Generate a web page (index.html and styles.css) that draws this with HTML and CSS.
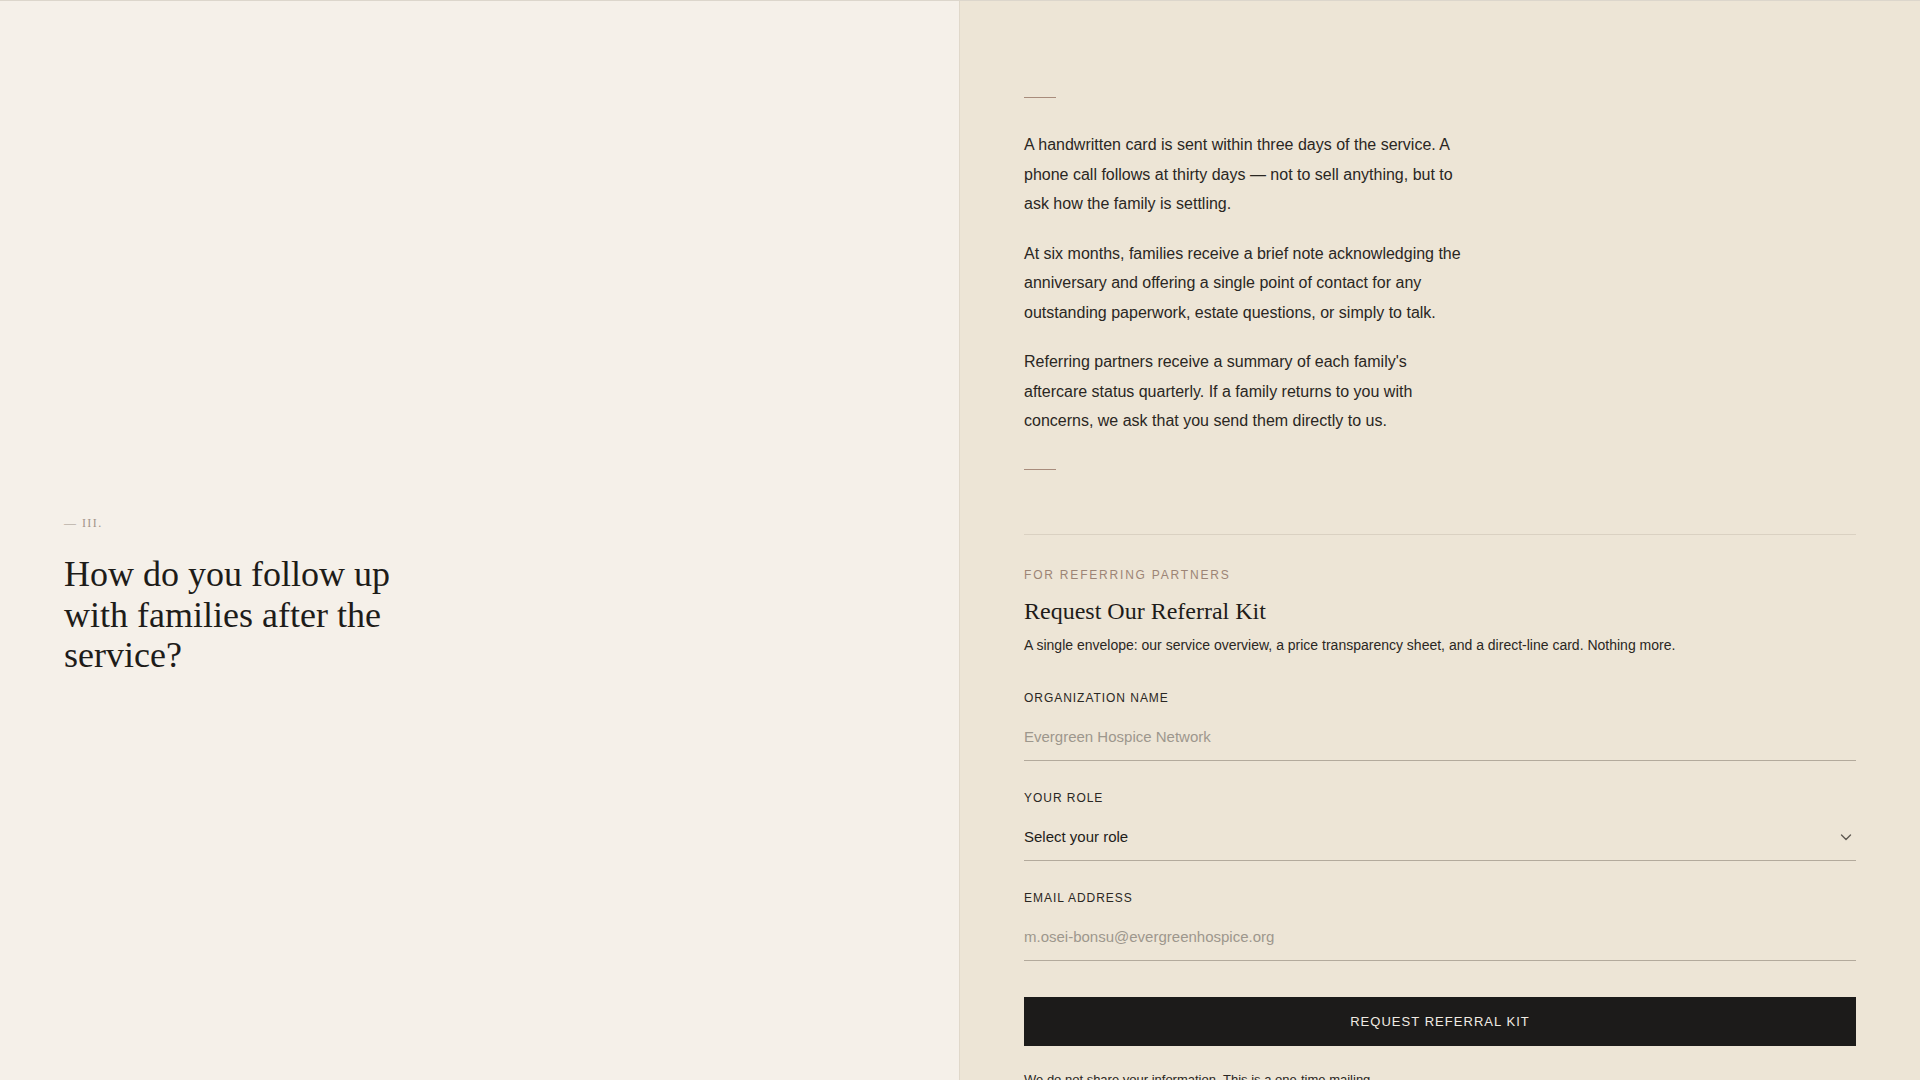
FILE: index.html
```html
<!DOCTYPE html>
<html lang="en">
<head>
<meta charset="utf-8">
<title>Aftercare — Referral Kit</title>
<link rel="stylesheet" href="styles.css">
</head>
<body>
<main class="split">
  <section class="question">
    <div class="question-inner">
      <p class="numeral">— III.</p>
      <h2 class="question-title">How do you follow up with families after the service?</h2>
    </div>
  </section>
  <section class="answer">
    <hr class="short-rule">
    <div class="answer-text">
      <p>A handwritten card is sent within three days of the service. A phone call follows at thirty days — not to sell anything, but to ask how the family is settling.</p>
      <p>At six months, families receive a brief note acknowledging the anniversary and offering a single point of contact for any outstanding paperwork, estate questions, or simply to talk.</p>
      <p>Referring partners receive a summary of each family's aftercare status quarterly. If a family returns to you with concerns, we ask that you send them directly to us.</p>
    </div>
    <hr class="short-rule">
    <div class="kit">
      <p class="eyebrow">FOR REFERRING PARTNERS</p>
      <h3 class="kit-title">Request Our Referral Kit</h3>
      <p class="kit-desc">A single envelope: our service overview, a price transparency sheet, and a direct-line card. Nothing more.</p>
      <form class="kit-form">
        <label class="field">
          <span class="field-label">ORGANIZATION NAME</span>
          <input class="field-input" type="text" placeholder="Evergreen Hospice Network">
        </label>
        <label class="field">
          <span class="field-label">YOUR ROLE</span>
          <span class="select-wrap">
            <select class="field-input field-select">
              <option>Select your role</option>
              <option>Hospice coordinator</option>
              <option>Social worker</option>
              <option>Chaplain</option>
            </select>
            <svg class="chevron" width="14" height="14" viewBox="0 0 14 14" aria-hidden="true"><path d="M2.5 5 L7 9.5 L11.5 5" fill="none" stroke="#5f5a52" stroke-width="1.4" stroke-linecap="round" stroke-linejoin="round"/></svg>
          </span>
        </label>
        <label class="field">
          <span class="field-label">EMAIL ADDRESS</span>
          <input class="field-input" type="email" placeholder="m.osei-bonsu@evergreenhospice.org">
        </label>
        <button class="submit" type="button">REQUEST REFERRAL KIT</button>
        <p class="note">We do not share your information. This is a one-time mailing.</p>
      </form>
    </div>
  </section>
</main>
</body>
</html>
```

FILE: styles.css
```css
* { box-sizing: border-box; }

html, body {
  margin: 0;
  padding: 0;
}

body {
  background: #ede5d6;
  border-top: 1px solid #dcd6cc;
  font-family: "Liberation Sans", Arial, sans-serif;
  color: #2a2723;
}

.split {
  display: grid;
  grid-template-columns: 960px 960px;
}

.question {
  background: #f5f0e9;
  border-right: 1px solid #e0d8ca;
  display: flex;
  align-items: center;
  padding: 0 64px;
}

.question-inner {
  padding-top: 3px;
}

.numeral {
  margin: 0 0 22px;
  font-family: "Liberation Serif", "Times New Roman", serif;
  font-size: 12px;
  line-height: 18px;
  letter-spacing: 0.12em;
  color: #a3948a;
}

.question-title {
  margin: 0;
  max-width: 360px;
  font-family: "Liberation Serif", "Times New Roman", serif;
  font-weight: 400;
  font-size: 36px;
  line-height: 40.4px;
  color: #1e1c19;
}

.answer {
  padding: 96px 64px 96px;
}

.short-rule {
  margin: 0;
  width: 32px;
  height: 0;
  border: 0;
  border-top: 1px solid #a88c7c;
}

.answer-text {
  margin: 32px 0 33px;
  max-width: 440px;
}

.answer-text p {
  margin: 0 0 20px;
  font-size: 16px;
  line-height: 29.5px;
  color: #2a2723;
}

.answer-text p:last-child { margin-bottom: 0; }

.kit {
  margin-top: 64px;
  border-top: 1px solid #dad1c2;
  padding-top: 31px;
}

.eyebrow {
  margin: 0;
  font-size: 12px;
  line-height: 18px;
  letter-spacing: 0.15em;
  color: #9c8475;
}

.kit-title {
  margin: 12px 0 0;
  font-family: "Liberation Serif", "Times New Roman", serif;
  font-weight: 400;
  font-size: 24px;
  line-height: 31px;
  color: #1e1c19;
}

.kit-desc {
  margin: 8px 0 0;
  font-size: 14px;
  line-height: 21px;
  color: #2a2723;
}

.kit-form {
  margin-top: 33px;
  display: flex;
  flex-direction: column;
}

.field {
  display: flex;
  flex-direction: column;
  margin-bottom: 28px;
}

.field-label {
  font-size: 12px;
  line-height: 18px;
  letter-spacing: 0.08em;
  color: #2a2723;
  margin-bottom: 8px;
}

.field-input {
  display: block;
  width: 100%;
  margin: 0;
  border: 0;
  border-bottom: 1px solid #b3aa9c;
  border-radius: 0;
  background: transparent;
  padding: 13px 0 14px;
  font-family: "Liberation Sans", Arial, sans-serif;
  font-size: 15px;
  line-height: 18px;
  height: 46px;
  color: #2a2723;
  outline: none;
}

.field-input::placeholder {
  color: #9d978d;
  opacity: 1;
}

.select-wrap {
  position: relative;
  display: block;
}

.field-select {
  appearance: none;
  -webkit-appearance: none;
  color: #1f1d1a;
  cursor: pointer;
}

.chevron {
  position: absolute;
  right: 3px;
  top: 15px;
  pointer-events: none;
}

.submit {
  margin-top: 8px;
  height: 49px;
  width: 100%;
  border: 0;
  border-radius: 0;
  background: #1c1b1a;
  color: #f0ebe3;
  font-family: "Liberation Sans", Arial, sans-serif;
  font-size: 13px;
  letter-spacing: 0.08em;
  cursor: pointer;
}

.note {
  margin: 24px 0 0;
  font-size: 13px;
  line-height: 20px;
  color: #2a2723;
}
```
